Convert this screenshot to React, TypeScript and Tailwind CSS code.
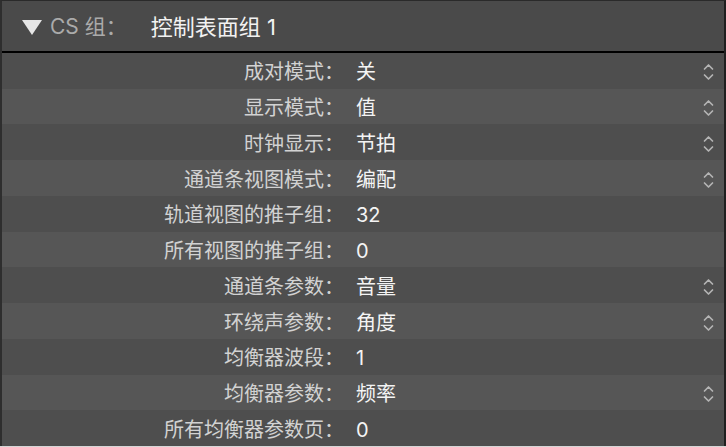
const rows: { label: string; value: string; select: boolean }[] = [
  { label: "成对模式：", value: "关", select: true },
  { label: "显示模式：", value: "值", select: true },
  { label: "时钟显示：", value: "节拍", select: true },
  { label: "通道条视图模式：", value: "编配", select: true },
  { label: "轨道视图的推子组：", value: "32", select: false },
  { label: "所有视图的推子组：", value: "0", select: false },
  { label: "通道条参数：", value: "音量", select: true },
  { label: "环绕声参数：", value: "角度", select: true },
  { label: "均衡器波段：", value: "1", select: false },
  { label: "均衡器参数：", value: "频率", select: true },
  { label: "所有均衡器参数页：", value: "0", select: false },
];

function Stepper() {
  return (
    <svg width="11" height="18" viewBox="0 0 11 18" fill="none" aria-hidden>
      <path d="M1.5 6 L5.5 2 L9.5 6" stroke="#b4b4b4" strokeWidth="1.7" strokeLinecap="round" strokeLinejoin="round" />
      <path d="M1.5 12 L5.5 16 L9.5 12" stroke="#b4b4b4" strokeWidth="1.7" strokeLinecap="round" strokeLinejoin="round" />
    </svg>
  );
}

export default function App() {
  return (
    <div
      className="h-[447px] w-[726px] overflow-hidden bg-[#d6d6d6]"
      style={{ fontFamily: '"Inter", "Noto Sans CJK SC", sans-serif' }}
    >
      <div className="flex h-[446px] flex-col border-l-2 border-r-2 border-t border-l-[#2e2e2e] border-r-[#1f1f1f] border-t-[#2a2a2a]">
        <header className="flex h-[52px] shrink-0 items-center border-b-2 border-black bg-[#4a4a4a] pl-[20px] pt-[2px]">
          <svg width="20" height="15" viewBox="0 0 20 15" aria-hidden>
            <path d="M0 0 H20 L10 15 Z" fill="#e6e6e6" />
          </svg>
          <span className="ml-[8px] text-[21px] text-[#ababab]">CS 组：</span>
          <span className="ml-[24px] text-[22px] text-[#f2f2f2]">控制表面组 1</span>
        </header>
        <div className="flex flex-1 flex-col">
          {rows.map((r, i) => (
            <div
              key={r.label}
              className={`flex flex-1 items-center pt-[3px] ${i % 2 === 0 ? "bg-[#4e4e4e]" : "bg-[#565656]"}`}
            >
              <div className="w-[342px] text-right text-[20px] text-[#d2d2d2]">{r.label}</div>
              <div className="ml-[12px] flex-1 text-[20px] text-[#f4f4f4]">{r.value}</div>
              {r.select && (
                <div className="mr-[10px] flex items-center">
                  <Stepper />
                </div>
              )}
            </div>
          ))}
        </div>
      </div>
    </div>
  );
}
